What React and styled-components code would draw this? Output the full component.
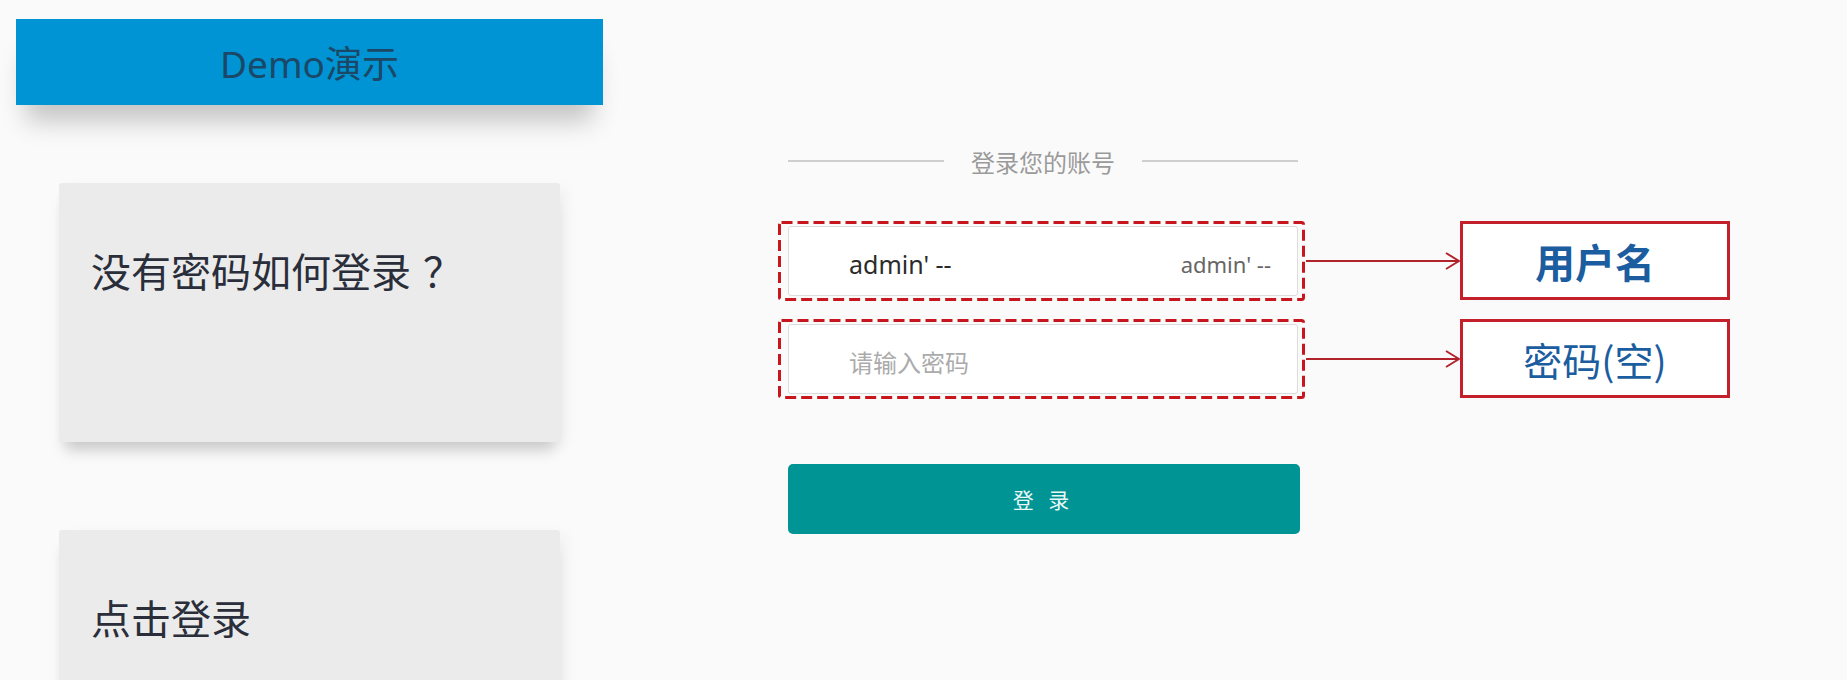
import React from "react";
import styled, { createGlobalStyle } from "styled-components";

const Global = createGlobalStyle`
  html, body {
    margin: 0;
    padding: 0;
    background: #fafafa;
    overflow: hidden;
    font-family: "Noto Sans", "Noto Sans CJK SC", sans-serif;
  }
`;

const Page = styled.div`
  display: flex;
  align-items: flex-start;
  height: 680px;
  overflow: hidden;
`;

const LeftColumn = styled.div`
  display: flex;
  flex-direction: column;
  padding: 19px 0 0 16px;
  width: 587px;
  flex: none;
`;

const TitleBar = styled.div`
  height: 86px;
  background: #0094d4;
  display: flex;
  align-items: center;
  justify-content: center;
  color: #1b4866;
  font-size: 37px;
  box-shadow: 0 26px 26px -10px rgba(0, 0, 0, 0.22);
`;

const Card = styled.div`
  margin: ${(p) => p.$top}px 0 0 43px;
  width: 501px;
  height: 259px;
  box-sizing: border-box;
  padding: 64px 32px 0;
  background: #ebebeb;
  border-radius: 3px;
  color: #2a2e3a;
  font-size: 40px;
  line-height: 47px;
  font-family: "Noto Sans CJK SC", sans-serif;
  box-shadow: 0 14px 14px -6px rgba(0, 0, 0, 0.18), 6px 4px 14px rgba(0, 0, 0, 0.04);
`;

const Punct = styled.span`
  padding-left: 12px;
`;

const RightColumn = styled.div`
  display: flex;
  flex-direction: column;
  margin-left: 185px;
  padding-top: 145px;
`;

const Divider = styled.div`
  width: 510px;
  height: 32px;
  display: flex;
  align-items: center;
  gap: 27px;
  color: #9a9a9a;
  font-size: 24px;
  font-family: "Noto Sans CJK SC", sans-serif;
`;

const Rule = styled.span`
  flex: 1;
  height: 1.5px;
  background: #cfcfcf;
`;

const Row = styled.div`
  display: flex;
  align-items: center;
  margin-top: ${(p) => p.$top}px;
`;

const InputWrap = styled.div`
  position: relative;
  width: 510px;
  height: 70px;
  flex: none;
`;

const Field = styled.div`
  box-sizing: border-box;
  height: 100%;
  background: #ffffff;
  border: 1px solid #dcdcdc;
  border-radius: 3px;
  display: flex;
  align-items: center;
  justify-content: space-between;
  padding: 6px 26px 0 60px;
  font-size: 25px;
`;

const Value = styled.span`
  color: #2b2b2b;
`;

const Hint = styled.span`
  color: #666;
  font-size: 22px;
`;

const Placeholder = styled.span`
  color: #ababab;
  font-family: "Noto Sans CJK SC", sans-serif;
  font-size: 24px;
`;

const DashOverlay = styled.svg`
  position: absolute;
  left: -10px;
  top: -5px;
  pointer-events: none;
`;

const Connector = styled.svg`
  flex: none;
  display: block;
`;

const Label = styled.div`
  box-sizing: border-box;
  width: 270px;
  height: 79px;
  border: 3px solid #c3202c;
  background: #ffffff;
  display: flex;
  align-items: center;
  justify-content: center;
  color: #1b5d9f;
  font-size: ${(p) => (p.$bold ? 40 : 39)}px;
  font-weight: ${(p) => (p.$bold ? 700 : 400)};
  font-family: "Noto Sans CJK SC", sans-serif;
`;

const LoginButton = styled.button`
  margin-top: 66px;
  width: 512px;
  height: 70px;
  border: none;
  border-radius: 5px;
  background: #009494;
  color: #e9f7f7;
  font-size: 21px;
  letter-spacing: 5px;
  padding-left: 5px;
  font-family: "Noto Sans CJK SC", sans-serif;
`;

function Dashed() {
  return (
    <DashOverlay width="527" height="80" viewBox="0 0 527 80">
      <rect
        x="1.5"
        y="1.5"
        width="524"
        height="77"
        rx="2"
        fill="none"
        stroke="#c8161f"
        strokeWidth="3"
        strokeDasharray="11 5"
      />
    </DashOverlay>
  );
}

function Arrow() {
  return (
    <Connector width="162" height="24" viewBox="0 0 162 24">
      <line x1="8" y1="12" x2="161" y2="12" stroke="#b0232b" strokeWidth="2" />
      <polyline points="148,4 161,12 148,20" fill="none" stroke="#b0232b" strokeWidth="2" />
    </Connector>
  );
}

export default function App() {
  return (
    <>
      <Global />
      <Page>
        <LeftColumn>
          <TitleBar>Demo演示</TitleBar>
          <Card $top={78}>
            没有密码如何登录<Punct>？</Punct>
          </Card>
          <Card $top={88}>点击登录</Card>
        </LeftColumn>
        <RightColumn>
          <Divider>
            <Rule />
            登录您的账号
            <Rule />
          </Divider>
          <Row $top={44}>
            <InputWrap>
              <Field>
                <Value>admin' --</Value>
                <Hint>admin' --</Hint>
              </Field>
              <Dashed />
            </InputWrap>
            <Arrow />
            <Label $bold>用户名</Label>
          </Row>
          <Row $top={19}>
            <InputWrap>
              <Field>
                <Placeholder>请输入密码</Placeholder>
              </Field>
              <Dashed />
            </InputWrap>
            <Arrow />
            <Label>密码(空)</Label>
          </Row>
          <LoginButton>登 录</LoginButton>
        </RightColumn>
      </Page>
    </>
  );
}
